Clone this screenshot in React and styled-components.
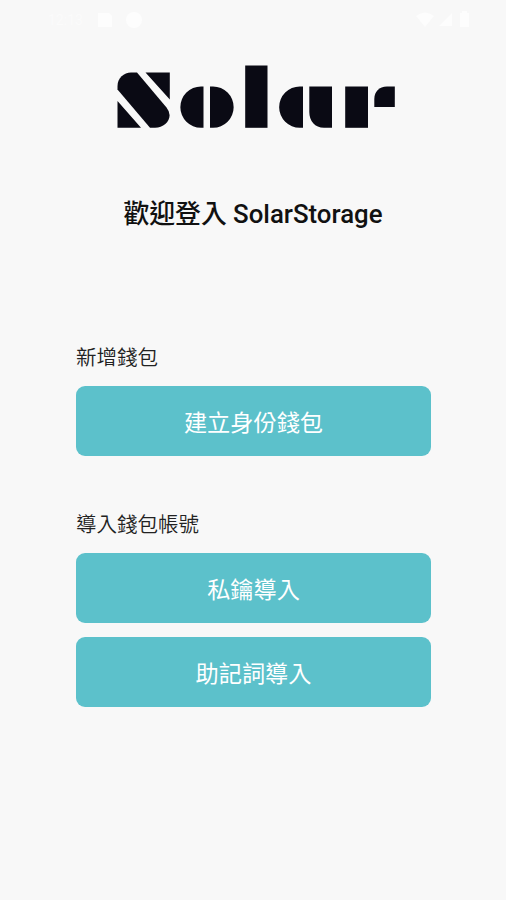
import React from "react";
import styled, { createGlobalStyle } from "styled-components";

const GlobalStyle = createGlobalStyle`
  * { box-sizing: border-box; }
  body { margin: 0; background: #f8f8f8; }
`;

const Screen = styled.main`
  display: flex;
  flex-direction: column;
  width: 506px;
  height: 900px;
  overflow: hidden;
  background: #f8f8f8;
  color: #111;
  font-family: Roboto, "Noto Sans CJK TC", sans-serif;
`;

const StatusBar = styled.header`
  display: flex;
  align-items: center;
  justify-content: space-between;
  height: 40px;
  padding: 0 35px 0 48px;
  color: #fdfdfd;
`;

const StatusGroup = styled.div`
  display: flex;
  align-items: center;
  gap: ${({ $gap }) => $gap}px;
`;

const Clock = styled.span`
  width: 38px;
  font-size: 14px;
  line-height: 20px;
  color: #fbfbfb;
`;

const Logo = styled.svg`
  display: block;
  width: 282px;
  height: 66px;
  margin: 24px 0 0 115px;
  fill: #0a0a14;
`;

const Title = styled.h1`
  margin: 64px 0 0;
  font-size: 25.8px;
  font-weight: 500;
  line-height: 40px;
  text-align: center;
  white-space: nowrap;
`;

const Section = styled.section`
  display: flex;
  flex-direction: column;
  width: 355px;
  margin: ${({ $top }) => $top}px 0 0 76px;
`;

const Label = styled.h2`
  margin: 0 0 12px;
  font-size: 20.5px;
  font-weight: 350;
  line-height: 32px;
  color: #222;
`;

const Actions = styled.div`
  display: flex;
  flex-direction: column;
  gap: 14px;
`;

const Button = styled.button`
  height: 70px;
  padding: 4px 0 0;
  border: 0;
  border-radius: 9px;
  background: #5cc1cb;
  color: #fff;
  font: 400 23.2px/34px Roboto, "Noto Sans CJK TC", sans-serif;
`;

const SolarLogo = () => (
  <Logo viewBox="115 64 282 66" role="img" aria-label="Solar">
    <path d="M117.5 89.5V86C117.5 78 124 72.5 131 72.5H137L166.5 107.5Q169.6 111.5 169.6 115C169.6 122 163 127.8 155 127.8H150Z" />
    <path d="M145.5 72.5H169.8V99.5ZM117.5 101V127.8H141Z" />
    <path d="M203.5 86.5V127.8H201A20.65 20.65 0 0 1 201 86.5ZM210 86.5V127.8H213A20.65 20.65 0 0 0 213 86.5Z" />
    <rect x="245.2" y="65.5" width="22.3" height="62.3" />
    <path d="M303 86.5V127.8H299.8A20.65 20.65 0 0 1 299.8 86.5ZM309.3 86.5H332V127.8H324C315 127.8 309.3 121 309.3 112Z" />
    <rect x="345.2" y="86.5" width="22.8" height="41.3" />
    <path d="M394.8 86.5V107H374.3V99C374.3 92 379 86.5 387 86.5Z" />
  </Logo>
);

const StatusIcons = () => (
  <svg width="55" height="18" viewBox="0 0 55 18" fill="currentColor" aria-hidden="true">
    <path d="M0 5Q9-2 18 5L9 16ZM23 15L36 2V15ZM44 2H46V0H51V2H53V16H44Z" />
  </svg>
);

const NoticeIcons = () => (
  <svg width="46" height="18" viewBox="0 0 46 18" fill="currentColor" aria-hidden="true">
    <path d="M0 2H11L14 5V16H0Z" />
    <circle cx="36" cy="9" r="8" />
  </svg>
);

export default function App() {
  return (
    <>
      <GlobalStyle />
      <Screen>
        <StatusBar>
          <StatusGroup $gap={12}>
            <Clock>12:13</Clock>
            <NoticeIcons />
          </StatusGroup>
          <StatusIcons />
        </StatusBar>
        <SolarLogo />
        <Title>歡迎登入 SolarStorage</Title>
        <Section $top={108}>
          <Label>新增錢包</Label>
          <Button type="button">建立身份錢包</Button>
        </Section>
        <Section $top={53}>
          <Label>導入錢包帳號</Label>
          <Actions>
            <Button type="button">私鑰導入</Button>
            <Button type="button">助記詞導入</Button>
          </Actions>
        </Section>
      </Screen>
    </>
  );
}
